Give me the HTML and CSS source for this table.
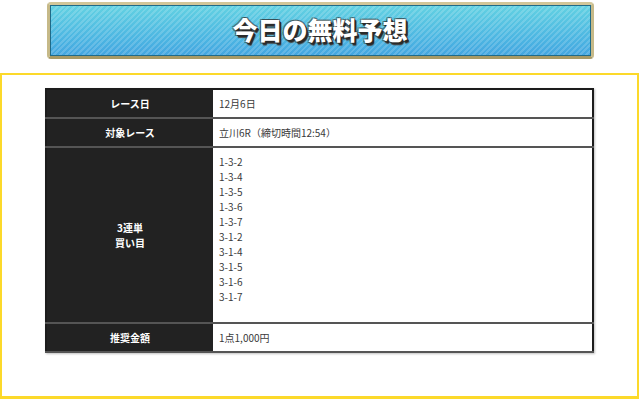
FILE: index.html
```html
<!DOCTYPE html>
<html lang="ja">
<head>
<meta charset="utf-8">
<title>今日の無料予想</title>
<link rel="stylesheet" href="styles.css">
</head>
<body>
<div class="banner">
  <div class="banner-inner">
    <h1 class="banner-title">今日の無料予想</h1>
  </div>
</div>
<div class="box">
  <table class="yoso">
    <tr>
      <th>レース日</th>
      <td>12月6日</td>
    </tr>
    <tr>
      <th>対象レース</th>
      <td>立川6R（締切時間12:54）</td>
    </tr>
    <tr>
      <th>3連単<br>買い目</th>
      <td class="tall">1-3-2<br>1-3-4<br>1-3-5<br>1-3-6<br>1-3-7<br>3-1-2<br>3-1-4<br>3-1-5<br>3-1-6<br>3-1-7</td>
    </tr>
    <tr>
      <th>推奨金額</th>
      <td>1点1,000円</td>
    </tr>
  </table>
</div>
</body>
</html>
```

FILE: styles.css
```css
html, body {
  margin: 0;
  padding: 0;
  background: #fff;
  overflow: hidden;
}
body {
  font-family: "Noto Sans CJK JP", "Noto Sans", "Liberation Sans", sans-serif;
  height: 399px;
}
.banner {
  box-sizing: border-box;
  width: 547px;
  height: 57px;
  margin: 2px auto 0;
  border: 3px solid #c6b988;
  border-top-color: #d2c699;
  border-bottom-color: #a89a66;
  border-radius: 4px;
  background: #c3b685;
}
.banner-inner {
  box-sizing: border-box;
  height: 100%;
  border: 1px solid #1f6a88;
  background:
    repeating-linear-gradient(135deg, rgba(255,255,255,0.16) 0 2px, rgba(255,255,255,0) 2px 4px),
    linear-gradient(#62d1e2, #4bb4e2 70%, #44a6e0);
  display: flex;
  align-items: center;
  justify-content: center;
}
.banner-title {
  margin: 0;
  font-size: 25px;
  line-height: 1;
  font-weight: 900;
  color: #fff;
  text-shadow:
    1px 1px 0 #2a2a2a,
    2px 2px 0 #2a2a2a,
    2px 3px 1px #444,
    -1px -1px 0 rgba(40,40,40,0.5),
    1px -1px 0 rgba(40,40,40,0.5),
    -1px 1px 0 rgba(40,40,40,0.5);
  transform: translateY(-1px);
}
.box {
  box-sizing: border-box;
  width: 639px;
  height: 326px;
  margin-top: 14px;
  border: 2px solid #fcd92a;
  border-bottom-width: 3px;
  padding-top: 13px;
}
.yoso {
  width: 549px;
  margin: 0 auto;
  border-collapse: collapse;
  border: 2px solid #1c1c1c;
  box-shadow: 1px 1px 2px rgba(0,0,0,0.25);
  font-size: 10px;
  line-height: 15px;
}
.yoso th,
.yoso td {
  border-bottom: 2px solid #555;
  padding: 6px 6px 6px;
  vertical-align: middle;
}
.yoso th {
  width: 154px;
  background: #222;
  color: #fff;
  font-weight: bold;
  text-align: center;
}
.yoso td {
  background: #fff;
  color: #3a3a3a;
  text-align: left;
}
.yoso td.tall {
  padding-bottom: 18px;
  vertical-align: top;
}
```
